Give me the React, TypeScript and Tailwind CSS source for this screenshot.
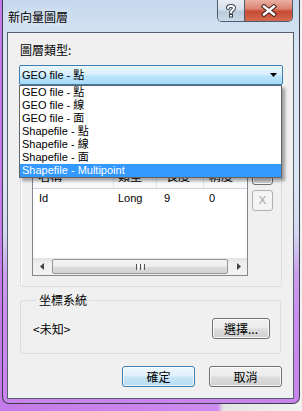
import React from "react";

const items = [
  "GEO file - 點",
  "GEO file - 線",
  "GEO file - 面",
  "Shapefile - 點",
  "Shapefile - 線",
  "Shapefile - 面",
  "Shapefile - Multipoint",
];

function WinButton({ children, className = "", def = false }: { children: React.ReactNode; className?: string; def?: boolean }) {
  return (
    <div
      className={
        "flex items-center justify-center rounded-[3px] border text-[12px] text-black font-['Noto_Sans_CJK_TC','Liberation_Sans',sans-serif] leading-none " +
        (def
          ? "border-[#3c7fb1] bg-[linear-gradient(to_bottom,#eef7fd_0%,#e0f0fb_48%,#c8e5f7_52%,#b9dcf2_100%)] shadow-[inset_0_0_0_1px_rgba(255,255,255,0.7)] "
          : "border-[#707070] bg-[linear-gradient(to_bottom,#f2f2f2_0%,#ebebeb_48%,#dddddd_52%,#cfcfcf_100%)] shadow-[inset_0_0_0_1px_rgba(255,255,255,0.8)] ") +
        className
      }
    >
      {children}
    </div>
  );
}

export default function App() {
  return (
    <div className="w-[302px] h-[411px] overflow-hidden bg-[linear-gradient(to_right,#c47ae9_0%,#cd8cef_72%,#e4e4e4_74%,#f2f2f2_100%)]">
      <div className="ml-[2px] w-[298px] h-[404px] flex flex-col rounded-b-[7px] border-x border-b border-[#3d3d4a] bg-[linear-gradient(to_bottom,#c5d8ee_0%,#d9e5f3_12%,#dbe6f3_45%,#d3d9f0_58%,#cb9eec_68%,#c98bee_80%,#c884ec_100%)]">
        {/* Title bar */}
        <div className="h-[32px] flex items-start">
          <div className="pl-[5px] pt-[9px] text-[12px] leading-[16px] text-black font-['Noto_Sans_CJK_TC',sans-serif] [text-shadow:0_0_6px_rgba(255,255,255,0.9)]">
            新向量圖層
          </div>
          <div className="ml-auto mr-[6px] flex h-[22px] rounded-b-[5px] border-x border-b border-[#4e5d6e] overflow-hidden">
            <div className="w-[27px] h-full flex items-center justify-center border-r border-[#4e5d6e] bg-[linear-gradient(to_bottom,#e8eef5_0%,#d6e0eb_45%,#bccbdb_55%,#cdd9e6_100%)]">
              <svg width="12" height="15" viewBox="0 0 12 15">
                <path d="M3 5 C3 2.2 9 2.2 9 5 C9 7 6 7.2 6 9.5" fill="none" stroke="#3a4552" strokeWidth="4" strokeLinecap="round" />
                <rect x="4" y="11" width="4" height="3.5" fill="#3a4552" />
                <path d="M3 5 C3 2.2 9 2.2 9 5 C9 7 6 7.2 6 9.5" fill="none" stroke="#ffffff" strokeWidth="2" strokeLinecap="round" />
                <rect x="5" y="12" width="2" height="1.5" fill="#ffffff" />
              </svg>
            </div>
            <div className="w-[47px] h-full flex items-center justify-center bg-[linear-gradient(to_bottom,#eab0a4_0%,#dc8674_40%,#c84b34_55%,#d56a4f_100%)]">
              <svg width="16" height="13" viewBox="0 0 16 13">
                <path d="M3 2.5 L13 10.5 M13 2.5 L3 10.5" stroke="#45201a" strokeWidth="4.4" strokeLinecap="square" />
                <path d="M3 2.5 L13 10.5 M13 2.5 L3 10.5" stroke="#ffffff" strokeWidth="2.4" strokeLinecap="square" />
              </svg>
            </div>
          </div>
        </div>

        {/* Client */}
        <div className="ml-[4px] mr-[5px] mb-[4px] h-[367px] border border-[#56606c] bg-[#f0f0f0] pl-[11px] pr-[10px] pt-[10px]">
          <div className="text-[12px] leading-[14px] text-black font-['Noto_Sans_CJK_TC',sans-serif] pl-[1px]">圖層類型:</div>

          {/* Combobox */}
          <div className="relative mt-[8px]">
            <div className="h-[20px] flex items-center rounded-[2px] border border-[#3c7fb1] bg-[linear-gradient(to_bottom,#eaf6fd_0%,#d9f0fc_45%,#bee6fd_55%,#a7d9f5_100%)] pl-[2px] pr-[5px]">
              <span className="text-[11px] leading-none text-black font-['Liberation_Sans','Noto_Sans_CJK_TC',sans-serif]">GEO file - 點</span>
              <svg className="ml-auto" width="7" height="4" viewBox="0 0 7 4">
                <path d="M0 0 H7 L3.5 4 Z" fill="#000" />
              </svg>
            </div>
            {/* Dropdown list */}
            <div className="absolute left-0 top-full z-10 w-[263px] border border-[#646464] bg-white shadow-[3px_3px_3px_rgba(0,0,0,0.35)]">
              {items.map((t, i) => (
                <div
                  key={t}
                  className={
                    "h-[13px] leading-[13px] pl-[2px] text-[11px] font-['Liberation_Sans','Noto_Sans_CJK_TC',sans-serif] whitespace-nowrap " +
                    (i === items.length - 1 ? "bg-[#3399ff] text-white" : "text-black")
                  }
                >
                  {t}
                </div>
              ))}
            </div>
          </div>

          {/* Group 1: fields */}
          <div className="mt-[6px] mx-[1px] h-[196px] rounded-[3px] border border-[#d5dfe5] shadow-[inset_1px_1px_0_#ffffff] pl-[11px] pt-[72px]">
            <div className="flex items-start">
              <div className="mt-[3px] w-[216px] h-[109px] border border-[#828790] bg-white flex flex-col">
                <div className="h-[21px] flex border-b border-[#d5d5d5] bg-[linear-gradient(to_bottom,#ffffff,#f7f8fa)] text-[12px] text-black font-['Noto_Sans_CJK_TC',sans-serif] leading-[14px]">
                  <div className="w-[81px] border-r border-[#e0e3e8] pl-[5px] pt-[1px]">名稱</div>
                  <div className="w-[43px] border-r border-[#e0e3e8] pl-[4px] pt-[1px]">類型</div>
                  <div className="w-[47px] border-r border-[#e0e3e8] pl-[9px] pt-[1px]">長度</div>
                  <div className="flex-1 pl-[5px] pt-[1px]">精度</div>
                </div>
                <div className="flex-1">
                  <div className="h-[18px] flex items-center text-[11px] text-black font-['Liberation_Sans',sans-serif]">
                    <div className="w-[81px] pl-[6px]">Id</div>
                    <div className="w-[43px] pl-[4px]">Long</div>
                    <div className="w-[47px] pl-[7px]">9</div>
                    <div className="flex-1 pl-[5px]">0</div>
                  </div>
                </div>
                <div className="h-[17px] flex items-center bg-[linear-gradient(to_bottom,#e3e3e3,#efefef_30%,#f2f2f2)]">
                  <div className="w-[17px] h-full flex items-center justify-center">
                    <svg width="4" height="7" viewBox="0 0 4 7"><path d="M4 0 V7 L0 3.5 Z" fill="#404040" /></svg>
                  </div>
                  <div className="ml-[2px] w-[176px] h-[15px] rounded-[2px] border border-[#979797] bg-[linear-gradient(to_bottom,#f5f5f5_0%,#ececec_50%,#dcdcdc_51%,#d4d4d4_100%)] flex items-center justify-center">
                    <div className="flex gap-[1px]">
                      <div className="w-[1px] h-[6px] bg-[#555]" />
                      <div className="w-[1px] h-[6px] bg-[#fff]" />
                      <div className="w-[1px] h-[6px] bg-[#555]" />
                      <div className="w-[1px] h-[6px] bg-[#fff]" />
                      <div className="w-[1px] h-[6px] bg-[#555]" />
                    </div>
                  </div>
                  <div className="ml-auto w-[17px] h-full flex items-center justify-center">
                    <svg width="4" height="7" viewBox="0 0 4 7"><path d="M0 0 V7 L4 3.5 Z" fill="#404040" /></svg>
                  </div>
                </div>
              </div>
              <div className="ml-[4px] flex flex-col gap-[5px]">
                <WinButton className="w-[21px] h-[21px]">
                  <span className="text-[11px] font-['Liberation_Sans',sans-serif] text-black">+</span>
                </WinButton>
                <div className="w-[21px] h-[21px] flex items-center justify-center rounded-[3px] border border-[#adb2b5] bg-[#f4f4f4] text-[11px] text-[#a0a0a0] font-['Liberation_Sans',sans-serif] leading-none">
                  X
                </div>
              </div>
            </div>
          </div>

          {/* Group 2: coordinate system */}
          <fieldset className="mt-[4px] ml-[1px] mr-[2px] rounded-[3px] border border-[#d5dfe5] pl-[12px] pr-[10px] pb-[14px]">
            <legend className="ml-[4px] px-[2px] text-[12px] leading-[18px] text-black font-['Noto_Sans_CJK_TC',sans-serif]">坐標系統</legend>
            <div className="mt-[9px] flex items-center">
              <span className="text-[12px] text-black font-['Noto_Sans_CJK_TC',sans-serif]">&lt;未知&gt;</span>
              <WinButton className="ml-auto w-[58px] h-[21px]">選擇...</WinButton>
            </div>
          </fieldset>

          {/* Footer */}
          <div className="mt-[12px] flex justify-end gap-[14px] pr-[1px]">
            <WinButton def className="w-[73px] h-[21px]">確定</WinButton>
            <WinButton className="w-[73px] h-[21px]">取消</WinButton>
          </div>
        </div>
      </div>
    </div>
  );
}
